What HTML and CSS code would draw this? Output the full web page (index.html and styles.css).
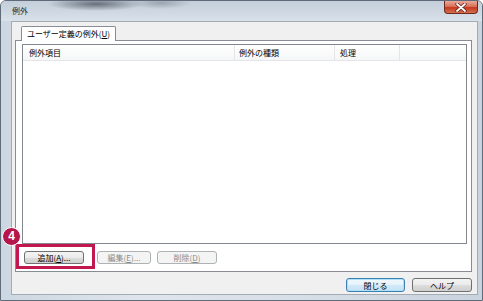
FILE: index.html
```html
<!DOCTYPE html>
<html lang="ja">
<head>
  <meta charset="UTF-8" />
  <meta name="viewport" content="width=device-width, initial-scale=1" />
  <title>例外</title>
  <link rel="stylesheet" href="styles.css">
</head>
<body>
  <div class="window">
    <div class="titlebar">
      <span class="title">例外</span>
      <span class="close">
        <svg width="12" height="9" viewBox="0 0 12 9">
          <path d="M2 1 L10 8 M10 1 L2 8" stroke="#5a1a10" stroke-width="3.2" stroke-linecap="round"/>
          <path d="M2 1 L10 8 M10 1 L2 8" stroke="#fff" stroke-width="1.8" stroke-linecap="round"/>
        </svg>
      </span>
    </div>
    <div class="client">
      <div class="tab-area">
        <div class="tab">ユーザー定義の例外(<u>U</u>)</div>
        <div class="panel">
          <div class="listview">
            <div class="lv-head">
              <div class="col col-item">例外項目</div>
              <div class="col col-type">例外の種類</div>
              <div class="col col-act">処理</div>
              <div class="col col-rest"></div>
            </div>
          </div>
          <div class="panel-buttons">
            <button class="btn btn-add">追加(<u>A</u>)...</button>
            <button class="btn btn-edit" disabled>編集(<u>E</u>)...</button>
            <button class="btn btn-del" disabled>削除(<u>D</u>)</button>
          </div>
        </div>
      </div>
      <div class="dialog-buttons">
        <button class="btn btn-default">閉じる</button>
        <button class="btn btn-help">ヘルプ</button>
      </div>
    </div>
    <div class="highlight"></div>
    <div class="badge">4</div>
  </div>
</body>
</html>
```

FILE: styles.css
```css
body {
  margin: 0;
  font-family: "Noto Sans CJK JP", "Noto Sans", sans-serif;
  font-size: 8px;
  color: #000;
  background: #fff;
}
.window {
  position: relative;
  width: 483px;
  height: 301px;
  box-sizing: border-box;
  border: 1px solid #5f6b78;
  border-radius: 6px 6px 0 0;
  background: linear-gradient(90deg, #cdd7e1, #dfe5ec 30%, #d4dce5 70%, #c9d3de);
  display: flex;
  flex-direction: column;
}
.titlebar {
  height: 20px;
  display: flex;
  align-items: flex-start;
  padding-left: 11px;
  border-radius: 5px 5px 0 0;
  background:
    radial-gradient(ellipse 48px 7px at 95px 3px, rgba(70,78,90,0.75), rgba(70,78,90,0)),
    radial-gradient(ellipse 30px 6px at 160px 2px, rgba(90,98,110,0.4), rgba(90,98,110,0)),
    linear-gradient(#c3ceda, #d9e1e9);
}
.title {
  padding-top: 5px;
  line-height: 10px;
  color: #1e1e1e;
}
.close {
  margin-left: auto;
  margin-right: 4px;
  width: 34px;
  height: 13px;
  box-sizing: border-box;
  border: 1px solid #6e2a1e;
  border-top: none;
  border-radius: 0 0 4px 4px;
  background: linear-gradient(#e9a99a, #d9725a 45%, #c4381f 55%, #d4704f);
  display: flex;
  align-items: center;
  justify-content: center;
}
.close svg {
  display: block;
}
.client {
  flex: 1;
  margin: 0 4px 5px 10px;
  border: 1px solid #a3abb5;
  background: #f0f0f0;
  display: flex;
  flex-direction: column;
}
.tab-area {
  margin: 0 5px 0 3px;
  padding-top: 4px;
}
.tab {
  display: inline-block;
  position: relative;
  z-index: 1;
  margin-left: 6px;
  margin-bottom: -1px;
  padding: 0 5px;
  height: 14px;
  line-height: 13px;
  border: 1px solid #898c95;
  border-bottom: none;
  border-radius: 2px 2px 0 0;
  background: #fff;
}
.tab u, .btn u {
  text-underline-offset: 1px;
}
.panel {
  border: 1px solid #898c95;
  background: #fff;
  padding: 3px 4px 7px 6px;
}
.listview {
  height: 200px;
  box-sizing: border-box;
  border: 1px solid #828790;
  background: #fff;
}
.lv-head {
  display: flex;
  height: 15px;
  border-bottom: 1px solid #e3e5e8;
  background: linear-gradient(#fff, #f5f6f7);
}
.col {
  box-sizing: border-box;
  padding-left: 6px;
  line-height: 15px;
  border-right: 1px solid #e5e5e5;
}
.col-item { width: 212px; }
.col-type { width: 100px; padding-left: 4px; }
.col-act { width: 65px; padding-left: 5px; }
.col-rest { flex: 1; border-right: none; }
.panel-buttons {
  display: flex;
  margin-top: 7px;
  padding-left: 2px;
}
.btn {
  height: 13px;
  box-sizing: border-box;
  padding: 0;
  border: 1px solid #707070;
  border-radius: 3px;
  background: linear-gradient(#f3f3f3, #ebebeb 50%, #dddddd 51%, #cfcfcf);
  font-family: inherit;
  font-size: 8px;
  line-height: 11px;
  color: #000;
}
.btn-add { width: 60px; }
.btn-edit { width: 54px; margin-left: 13px; }
.btn-del { width: 60px; margin-left: 6px; }
.btn:disabled {
  border-color: #adb2b5;
  background: #f4f4f4;
  color: #8a8a8a;
}
.dialog-buttons {
  display: flex;
  justify-content: flex-end;
  gap: 7px;
  padding: 6px 5px 0;
}
.dialog-buttons .btn {
  height: 14px;
  width: 60px;
}
.dialog-buttons .btn-default {
  width: 59px;
  border-color: #3c7fb1;
  box-shadow: inset 0 0 0 1px #aee0f7;
  background: linear-gradient(#f2f8fc, #e3f2fb 50%, #d2e9f7 51%, #c6e2f4);
}
.highlight {
  position: absolute;
  left: 15px;
  top: 243px;
  width: 79px;
  height: 25px;
  box-sizing: border-box;
  border: 3px solid #c3174f;
}
.badge {
  position: absolute;
  left: 1px;
  top: 226px;
  width: 19px;
  height: 19px;
  box-sizing: border-box;
  border: 1.5px solid #fff;
  border-radius: 50%;
  background: #b5154a;
  color: #fff;
  font-family: "Liberation Sans", Arial, sans-serif;
  font-weight: bold;
  font-size: 12px;
  line-height: 16px;
  text-align: center;
}
```
